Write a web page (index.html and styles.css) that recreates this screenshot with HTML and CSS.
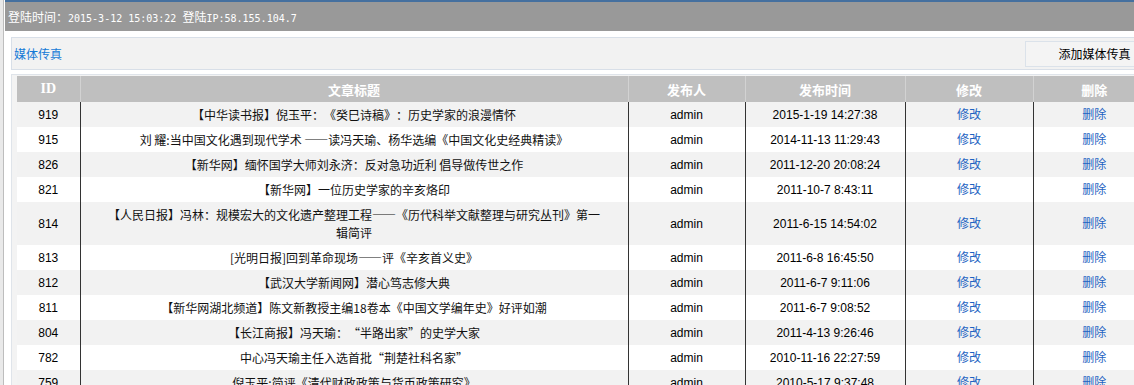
FILE: index.html
```html
<!DOCTYPE html>
<html lang="zh-CN">
<head>
<meta charset="utf-8">
<title>媒体传真</title>
<link rel="stylesheet" href="styles.css">
</head>
<body>
<div class="side"></div>
<div class="main">
  <div class="topline"></div>
  <div class="bar">登陆时间：<span class="mono">2015-3-12 15:03:22 </span>登陆<span class="mono">IP:58.155.104.7</span></div>
  <div class="content">
    <div class="toolbar">
      <a class="crumb">媒体传真</a>
      <span class="btn">添加媒体传真</span>
    </div>
    <div class="wrap">
      <table class="grid">
        <colgroup>
          <col class="c-id"><col class="c-title"><col class="c-user"><col class="c-time"><col class="c-edit"><col class="c-del">
        </colgroup>
        <thead>
          <tr><th class="th-id">ID</th><th>文章标题</th><th>发布人</th><th>发布时间</th><th>修改</th><th>删除</th></tr>
        </thead>
        <tbody>
          <tr><td>919</td><td class="t">【中华读书报】倪玉平：《癸巳诗稿》：历史学家的浪漫情怀</td><td>admin</td><td>2015-1-19 14:27:38</td><td><a>修改</a></td><td><a>删除</a></td></tr>
          <tr><td>915</td><td class="t">刘 耀:当中国文化遇到现代学术 ——读冯天瑜、杨华选编《中国文化史经典精读》</td><td>admin</td><td>2014-11-13 11:29:43</td><td><a>修改</a></td><td><a>删除</a></td></tr>
          <tr><td>826</td><td class="t">【新华网】缅怀国学大师刘永济：反对急功近利 倡导做传世之作</td><td>admin</td><td>2011-12-20 20:08:24</td><td><a>修改</a></td><td><a>删除</a></td></tr>
          <tr><td>821</td><td class="t">【新华网】一位历史学家的辛亥烙印</td><td>admin</td><td>2011-10-7 8:43:11</td><td><a>修改</a></td><td><a>删除</a></td></tr>
          <tr><td>814</td><td class="t">【人民日报】冯林：规模宏大的文化遗产整理工程——《历代科举文献整理与研究丛刊》第一<br>辑简评</td><td>admin</td><td>2011-6-15 14:54:02</td><td><a>修改</a></td><td><a>删除</a></td></tr>
          <tr><td>813</td><td class="t">[光明日报]回到革命现场——评《辛亥首义史》</td><td>admin</td><td>2011-6-8 16:45:50</td><td><a>修改</a></td><td><a>删除</a></td></tr>
          <tr><td>812</td><td class="t">【武汉大学新闻网】潜心笃志修大典</td><td>admin</td><td>2011-6-7 9:11:06</td><td><a>修改</a></td><td><a>删除</a></td></tr>
          <tr><td>811</td><td class="t">【新华网湖北频道】陈文新教授主编18卷本《中国文学编年史》好评如潮</td><td>admin</td><td>2011-6-7 9:08:52</td><td><a>修改</a></td><td><a>删除</a></td></tr>
          <tr><td>804</td><td class="t">【长江商报】冯天瑜：“半路出家”的史学大家</td><td>admin</td><td>2011-4-13 9:26:46</td><td><a>修改</a></td><td><a>删除</a></td></tr>
          <tr><td>782</td><td class="t">中心冯天瑜主任入选首批“荆楚社科名家”</td><td>admin</td><td>2010-11-16 22:27:59</td><td><a>修改</a></td><td><a>删除</a></td></tr>
          <tr><td>759</td><td class="t">倪玉平:简评《清代财政政策与货币政策研究》</td><td>admin</td><td>2010-5-17 9:37:48</td><td><a>修改</a></td><td><a>删除</a></td></tr>
        </tbody>
      </table>
    </div>
  </div>
</div>
</body>
</html>
```

FILE: styles.css
```css
html, body {
  margin: 0;
  padding: 0;
  overflow: hidden;
  background: #fff;
}
body {
  display: flex;
  font-family: "Liberation Sans", "Noto Sans CJK SC", sans-serif;
  font-size: 12px;
  color: #000;
  min-height: 385px;
  text-spacing-trim: space-all;
}
.side {
  width: 3px;
  flex: none;
  background: #e9e9e9;
  border-right: 1px solid #bdbdbd;
}
.main {
  flex: 1;
  min-width: 0;
  padding-left: 1px;
}
.topline {
  height: 2px;
  background: #45709f;
}
.bar {
  height: 29px;
  line-height: 29px;
  background: #999999;
  color: #fff;
  padding-left: 3px;
  font-family: "Noto Sans CJK SC", sans-serif;
  font-size: 12px;
  white-space: nowrap;
}
.mono {
  font-family: "DejaVu Sans Mono", monospace;
  font-size: 10px;
}
.content {
  padding: 6px 0 0 6px;
}
.toolbar {
  display: flex;
  align-items: center;
  justify-content: space-between;
  height: 31px;
  border: 1px solid #d8dfe8;
  border-right: none;
  background: #f2f2f2;
  padding-left: 2px;
  width: 1150px;
}
.crumb {
  color: #1479d6;
  font-family: "Noto Sans CJK SC", sans-serif;
  font-size: 12px;
}
.btn {
  width: 137px;
  height: 24px;
  line-height: 24px;
  text-align: center;
  border: 1px solid #dbe2ea;
  background: #f4f4f4;
  color: #000;
  font-family: "Noto Sans CJK SC", sans-serif;
  font-size: 12px;
}
.wrap {
  margin-top: 4px;
  border-top: 1px solid #dfe4ea;
  border-left: 1px solid #dfe4ea;
  background: #f3f3f3;
  padding: 1px 0 0 5px;
  width: 1200px;
}
.grid {
  table-layout: fixed;
  border-collapse: collapse;
  width: 1138px;
}
.c-id { width: 63px; }
.c-title { width: 548px; }
.c-user { width: 117px; }
.c-time { width: 160px; }
.c-edit { width: 128px; }
.c-del { width: 122px; }
.grid th {
  height: 26px;
  padding: 0;
  background: #bfbfbf;
  color: #fff;
  font-family: "Noto Sans CJK SC", sans-serif;
  font-size: 13px;
  font-weight: bold;
  text-align: center;
  border-left: 1px solid #d2d2d2;
}
.grid th:first-child { border-left: none; }
.grid .th-id {
  font-family: "Liberation Serif", serif;
  font-size: 14px;
}
.grid td {
  padding: 4px 0 3px;
  line-height: 18px;
  text-align: center;
  border-left: 1px solid #333;
  background: #fff;
}
.grid td.t {
  font-family: "Noto Sans CJK SC", sans-serif;
  color: #111;
}
.grid td:first-child { border-left: none; }
.grid tbody tr:nth-child(odd) td { background: #f2f2f2; }
.grid td a {
  color: #1d63c2;
}
```
